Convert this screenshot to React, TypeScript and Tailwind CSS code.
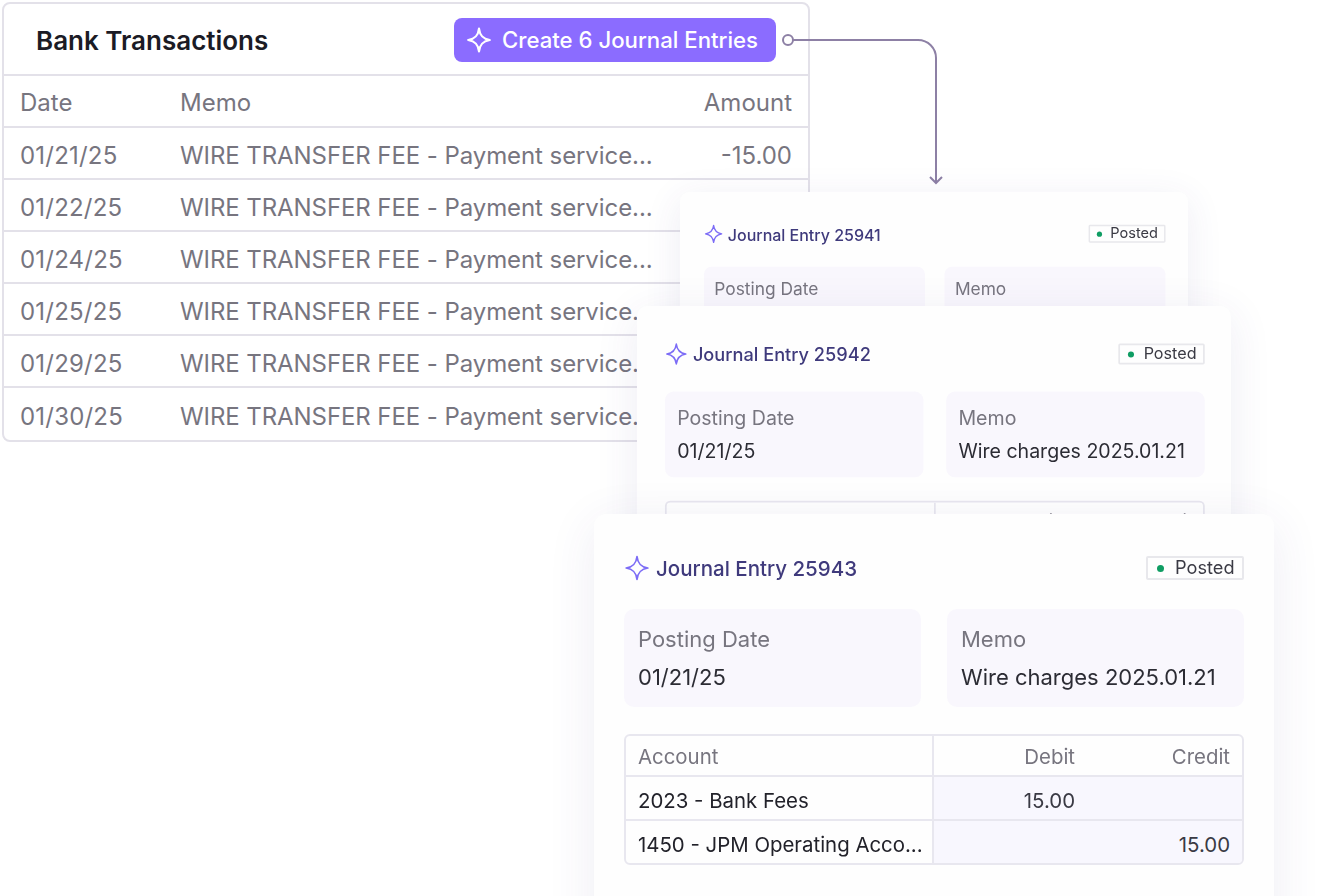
import React from 'react';

const rows = [
  { date: '01/21/25', amount: '-15.00' },
  { date: '01/22/25', amount: '-15.00' },
  { date: '01/24/25', amount: '-15.00' },
  { date: '01/25/25', amount: '-15.00' },
  { date: '01/29/25', amount: '-15.00' },
  { date: '01/30/25', amount: '-15.00' },
];

const memo = 'WIRE TRANSFER FEE - Payment service...';

// Four point star used on the button and the card titles
const Sparkle = ({ className, weight = 1.6 }: { className: string; weight?: number }) => (
  <svg viewBox="0 0 24 24" fill="none" stroke="currentColor" strokeWidth={weight} strokeLinejoin="round" className={className}>
    <path d="M12 1.5C12.8 8 15.5 11 22 12C15.5 13 12.8 16 12 22.5C11.2 16 8.5 13 2 12C8.5 11 11.2 8 12 1.5Z" />
  </svg>
);

interface CardProps {
  number: number;
  className: string;
  titleSize: string;
  badgeSize: string;
  fieldSize: string;
  fieldsTop: string;
}

const JournalCard = ({ number, className, titleSize, badgeSize, fieldSize, fieldsTop }: CardProps) => (
  <div className={`absolute w-[680px] h-[480px] origin-top-left rounded-[12px] bg-[#fefefe] pr-[30px] shadow-[0_10px_50px_rgba(70,60,130,0.09)] ${className}`}>
    <div className="flex items-center justify-between h-[24px]">
      <div className="flex items-center gap-[6px]">
        <Sparkle className="w-[26px] h-[26px] text-[#7c6cf6]" />
        <span className={`pt-[2px] font-medium text-[#3f3a7c] ${titleSize}`}>Journal Entry {number}</span>
      </div>
      <div className={`flex items-center h-[24px] pl-[9px] gap-[11px] border-2 border-[#e8e8ec] rounded-[2px] text-[#3a3a44] ${badgeSize}`}>
        <span className="w-[7px] h-[7px] rounded-full bg-[#0f9d63]"></span>
        Posted
      </div>
    </div>

    <div className={`grid grid-cols-2 gap-[26px] ${fieldsTop}`}>
      <div className="h-[98px] rounded-[10px] bg-[#f9f7fd] px-[14px] pt-[17px]">
        <p className={`leading-[26px] text-[#77757f] ${fieldSize}`}>Posting Date</p>
        <p className={`mt-[12px] leading-[26px] text-[#2c2c34] ${fieldSize}`}>01/21/25</p>
      </div>
      <div className="h-[98px] rounded-[10px] bg-[#f9f7fd] px-[14px] pt-[17px]">
        <p className={`leading-[26px] text-[#77757f] ${fieldSize}`}>Memo</p>
        <p className={`mt-[12px] leading-[26px] text-[#2c2c34] whitespace-nowrap ${fieldSize}`}>Wire charges 2025.01.21</p>
      </div>
    </div>

    <div className="mt-[27px] rounded-[6px] border-2 border-[#e8e7ef] text-[20.4px] leading-[26px] overflow-hidden">
      <div className="grid grid-cols-[308px_1fr] h-[41px] border-b-2 border-[#e8e7ef] text-[#77757f]">
        <div className="pl-[12px] pt-[8px] border-r-2 border-[#e8e7ef]">Account</div>
        <div className="grid grid-cols-[141px_1fr] pt-[8px] pr-[12px] text-right">
          <span>Debit</span>
          <span>Credit</span>
        </div>
      </div>
      <div className="grid grid-cols-[308px_1fr] h-[44px] border-b-2 border-[#e8e7ef] text-[#22222a]">
        <div className="pl-[12px] pt-[11px] border-r-2 border-[#e8e7ef]">2023 - Bank Fees</div>
        <div className="grid grid-cols-[141px_1fr] pt-[11px] pr-[12px] text-right bg-[#f8f7fe] text-[#3a3a44]">
          <span>15.00</span>
          <span></span>
        </div>
      </div>
      <div className="grid grid-cols-[308px_1fr] h-[42px] text-[#22222a]">
        <div className="pl-[12px] pt-[11px] border-r-2 border-[#e8e7ef] whitespace-nowrap overflow-hidden">1450 - JPM Operating Acco...</div>
        <div className="grid grid-cols-[141px_1fr] pt-[11px] pr-[12px] text-right bg-[#f8f7fe] text-[#3a3a44]">
          <span></span>
          <span>15.00</span>
        </div>
      </div>
    </div>
  </div>
);

export default function App() {
  return (
    <div className="relative w-[1344px] h-[896px] overflow-hidden bg-white p-[2px] font-[Inter,sans-serif]">
      {/* Bank table */}
      <div className="w-[808px] rounded-[8px] border-2 border-[#e3e1e9] bg-white text-[24px] text-[#77757f]">
        <div className="flex items-center justify-between h-[72px] px-[32px] pt-[2px] border-b-2 border-[#e3e1e9]">
          <h2 className="text-[26px] font-semibold text-[#1b1b25]">Bank Transactions</h2>
          <button className="flex items-center gap-[10px] h-[44px] w-[322px] pl-[12px] rounded-[8px] bg-[#8b6cff] text-[22.2px] font-medium text-white">
            <Sparkle className="w-[26px] h-[26px] text-white" weight={2} />
            <span>Create 6 Journal Entries</span>
          </button>
        </div>
        <div className="flex items-center h-[52px] px-[16px] pt-[4px] border-b-2 border-[#e3e1e9]">
          <span className="w-[160px]">Date</span>
          <span className="flex-1">Memo</span>
          <span>Amount</span>
        </div>
        {rows.map((row, i) => (
          <div key={row.date} className={`flex items-center h-[52px] px-[16px] pt-[6px] ${i < rows.length - 1 ? 'border-b-2 border-[#e3e1e9]' : ''}`}>
            <span className="w-[160px] tracking-[0.2px]">{row.date}</span>
            <span className="w-[472px] whitespace-nowrap tracking-[-0.08px]">{memo}</span>
            <span className="flex-1 text-right">{row.amount}</span>
          </div>
        ))}
      </div>

      {/* Connector from button to the cards */}
      <svg className="absolute left-[776px] top-[28px] w-[170px] h-[160px]" viewBox="0 0 170 160" fill="none" stroke="#8d80a5" strokeWidth="2">
        <circle cx="12" cy="12" r="5" />
        <path d="M17 12H142C152 12 160 20 160 30V155" />
        <path d="M154 149L160 155L166 149" />
      </svg>

      <JournalCard
        number={25941}
        className="left-[680px] top-[192px] scale-[0.747] pl-[32px] pt-[44px]"
        titleSize="text-[21.4px]"
        badgeSize="text-[19.5px] w-[103px]"
        fieldSize="text-[23.2px]"
        fieldsTop="mt-[32px]"
      />
      <JournalCard
        number={25942}
        className="left-[637px] top-[306px] scale-[0.8735] pl-[32px] pt-[43px]"
        titleSize="text-[20.8px]"
        badgeSize="text-[18.5px] w-[99px]"
        fieldSize="text-[22.4px]"
        fieldsTop="mt-[31px]"
      />
      <JournalCard
        number={25943}
        className="left-[594px] top-[514px] pl-[30px] pt-[42px]"
        titleSize="text-[20.5px]"
        badgeSize="text-[18.2px] w-[98px]"
        fieldSize="text-[22px]"
        fieldsTop="mt-[29px]"
      />
    </div>
  );
}
